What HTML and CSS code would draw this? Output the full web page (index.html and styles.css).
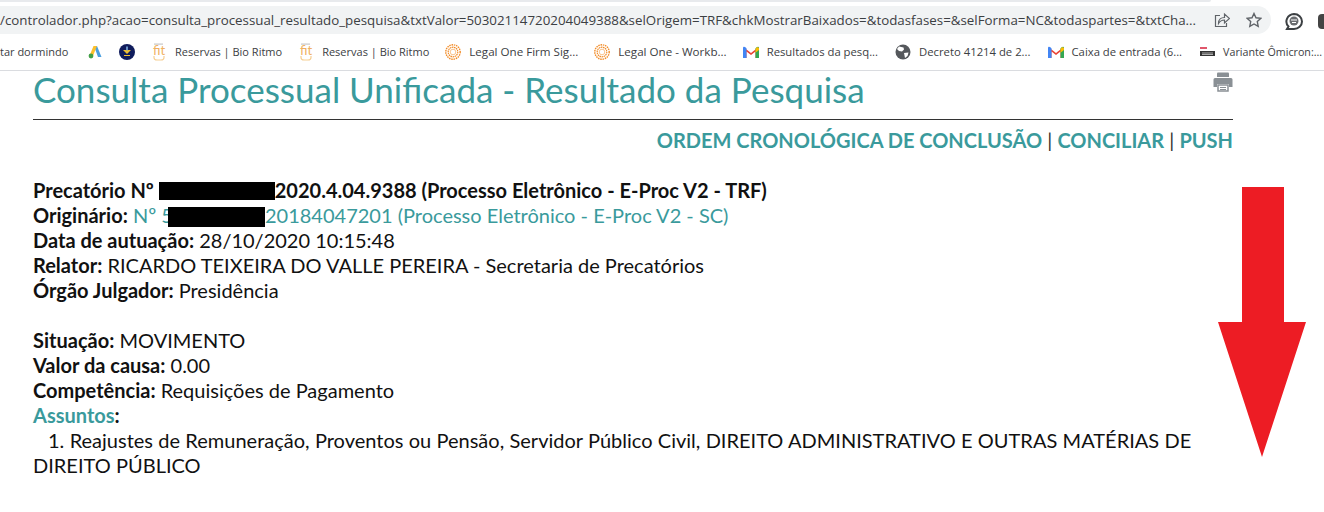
FILE: index.html
```html
<!DOCTYPE html>
<html lang="pt-BR">
<head>
  <meta charset="UTF-8">
  <title>Consulta Processual Unificada</title>
  <link rel="stylesheet" href="styles.css">
</head>
<body>

<div class="top-strip"></div>
<div class="toolbar">
  <div class="omnibox">
    <span class="url">/controlador.php?acao=consulta_processual_resultado_pesquisa&amp;txtValor=50302114720204049388&amp;selOrigem=TRF&amp;chkMostrarBaixados=&amp;todasfases=&amp;selForma=NC&amp;todaspartes=&amp;txtCha...</span>
    <svg class="omni-icon" width="16" height="16" viewBox="0 0 16 16" fill="none" stroke="#5f6368" stroke-width="1.200"><path d="M6 3.500H1.500v11h11V11"/><path d="M4.500 11.500C4.500 7.500 7 5.500 10.500 5.500V2l5 4.500-5 4.500V8C8 8 6 9 4.500 11.500z"/></svg>
    <svg class="omni-icon" width="16" height="16" viewBox="0 0 16 16" fill="none" stroke="#5f6368" stroke-width="1.400"><path d="M8 1.500l2 4.300 4.700.6-3.400 3.200.9 4.700L8 12l-4.200 2.300.9-4.700L1.300 6.400 6 5.800z"/></svg>
  </div>
  <svg class="ext-chat" width="18" height="17" viewBox="0 0 18 17"><path d="M9 1a8 7.500 0 0 1 0 15H2l1.500-2.500A8 7.500 0 0 1 9 1z" fill="#fff" stroke="#3c4043" stroke-width="2"/><circle cx="9" cy="8" r="4.500" fill="#6a6d70"/><path d="M6 7h6M7 9.500h4" stroke="#fff"/></svg>
  <div class="ext-cut"></div>
</div>

<div class="bookmarks">
  <span class="bm bm-first">tar dormindo</span>
  <span class="bm"><svg width="16" height="16" viewBox="0 0 16 16"><path d="M7 2h3l4.500 11H11z" fill="#4a9fe0"/><path d="M6.500 2H10L5.500 13H2z" fill="#fbc02d"/><circle cx="4" cy="12" r="2.400" fill="#43a047"/></svg></span>
  <span class="bm"><svg width="16" height="16" viewBox="0 0 16 16"><circle cx="8" cy="8" r="8" fill="#101c5c"/><path d="M4 6h8L8 10z" fill="#f0c030"/><rect x="7.200" y="2.500" width="1.600" height="4" fill="#7fb0e0"/><rect x="5" y="11" width="6" height="1" fill="#f0c030"/></svg></span>
  <span class="bm">
    <svg class="fav" width="16" height="18" viewBox="0 0 16 18"><rect x="3" y="0.500" width="9" height="1.200" fill="#c8c8c8"/><text x="8" y="12" text-anchor="middle" class="fit">fit</text><path d="M3 13v1.500q0 2.500 3 2.500h4q3 0 3-2.500V13" fill="none" stroke="#f6cf94" stroke-width="1.200"/></svg>
    Reservas | Bio Ritmo
  </span>
  <span class="bm">
    <svg class="fav" width="16" height="18" viewBox="0 0 16 18"><rect x="3" y="0.500" width="9" height="1.200" fill="#c8c8c8"/><text x="8" y="12" text-anchor="middle" class="fit">fit</text><path d="M3 13v1.500q0 2.500 3 2.500h4q3 0 3-2.500V13" fill="none" stroke="#f6cf94" stroke-width="1.200"/></svg>
    Reservas | Bio Ritmo
  </span>
  <span class="bm bm-legal">
    <svg class="fav" width="16" height="16" viewBox="0 0 16 16" fill="none" stroke="#f28c28"><circle cx="8" cy="8" r="7.200" stroke-width="1.400" stroke-dasharray="1.500 .8"/><circle cx="8" cy="8" r="4.800" stroke-width="1.200" stroke-dasharray="1.500 .6"/><circle cx="8" cy="8" r="2.800" stroke="#f9c48f"/></svg>
    Legal One Firm Sig...
  </span>
  <span class="bm bm-legal">
    <svg class="fav" width="16" height="16" viewBox="0 0 16 16" fill="none" stroke="#f28c28"><circle cx="8" cy="8" r="7.200" stroke-width="1.400" stroke-dasharray="1.500 .8"/><circle cx="8" cy="8" r="4.800" stroke-width="1.200" stroke-dasharray="1.500 .6"/><circle cx="8" cy="8" r="2.800" stroke="#f9c48f"/></svg>
    Legal One - Workb...
  </span>
  <span class="bm bm-mid">
    <svg class="fav" width="16" height="12" viewBox="0 0 16 12"><path d="M1 12V1.500L8 7l7-5.500V12h-2.500V5.500L8 9 3.500 5.500V12z" fill="#ea4335"/><path d="M0 12V2q0-2 2-1l1.500 1.200V12z" fill="#4285f4"/><path d="M16 12V2q0-2-2-1l-1.500 1.200V12z" fill="#34a853"/><path d="M14 1l2 1v2l-3.500 2.700V3z" fill="#fbbc04"/></svg>
    Resultados da pesq...
  </span>
  <span class="bm bm-mid">
    <svg class="fav" width="16" height="16" viewBox="0 0 16 16"><circle cx="8" cy="8" r="7.500" fill="#55585c"/><path d="M4 2.500l4.500 1 .5 2-2 2-3-.5-2-2zM9 9l4.500-.5-1 3.500-2.500 2z" fill="#fff"/></svg>
    Decreto 41214 de 2...
  </span>
  <span class="bm bm-mid">
    <svg class="fav" width="16" height="12" viewBox="0 0 16 12"><path d="M1 12V1.500L8 7l7-5.500V12h-2.500V5.500L8 9 3.500 5.500V12z" fill="#ea4335"/><path d="M0 12V2q0-2 2-1l1.500 1.200V12z" fill="#4285f4"/><path d="M16 12V2q0-2-2-1l-1.500 1.200V12z" fill="#34a853"/><path d="M14 1l2 1v2l-3.500 2.700V3z" fill="#fbbc04"/></svg>
    Caixa de entrada (6...
  </span>
  <span class="bm bm-last">
    <svg class="fav" width="16" height="12" viewBox="0 0 16 12"><rect x="1" y="1" width="7" height="2" fill="#e0576b"/><rect x="1" y="5" width="15" height="5" fill="#333"/><path d="M3 7h11M3 8.500h11" stroke="#fff" stroke-width=".6"/></svg>
    Variante Ômicron:...
  </span>
</div>

<main class="page">
  <div class="title-row">
    <h1>Consulta Processual Unificada - Resultado da Pesquisa</h1>
    <svg class="printer" width="20" height="20" viewBox="0 0 20 20"><path d="M4 1.500q0-1 1-1h10q1 0 1 1V5H4z" fill="#8a9095"/><path d="M2 6h16q1.500 0 1.500 1.500V15H16v-3H4v3H.5V7.500Q.5 6 2 6z" fill="#8a9095"/><path d="M5 13h10v6H5z" fill="#fff" stroke="#8a9095" stroke-width="1.500"/><path d="M7 15.500h6M7 17.500h6" stroke="#8a9095"/></svg>
  </div>
  <nav class="links">
    <a>ORDEM CRONOLÓGICA DE CONCLUSÃO</a> | <a>CONCILIAR</a> | <a>PUSH</a>
  </nav>

  <section class="dados">
    <div><b>Precatório Nº <span class="tarja t1"></span>2020.4.04.9388 (Processo Eletrônico - E-Proc V2 - TRF)</b></div>
    <div><b>Originário:</b> <a>Nº 5<span class="tarja t2"></span>20184047201 (Processo Eletrônico - E-Proc V2 - SC)</a></div>
    <div><b>Data de autuação:</b> 28/10/2020 10:15:48</div>
    <div><b>Relator:</b> RICARDO TEIXEIRA DO VALLE PEREIRA - Secretaria de Precatórios</div>
    <div><b>Órgão Julgador:</b> Presidência</div>
    <br>
    <div><b>Situação:</b> MOVIMENTO</div>
    <div><b>Valor da causa:</b> 0.00</div>
    <div><b>Competência:</b> Requisições de Pagamento</div>
    <div><b><a>Assuntos</a>:</b></div>
    <div class="assunto">1. Reajustes de Remuneração, Proventos ou Pensão, Servidor Público Civil, DIREITO ADMINISTRATIVO E OUTRAS MATÉRIAS DE DIREITO PÚBLICO</div>
  </section>
</main>

<svg class="seta" width="88" height="270" viewBox="0 0 88 270"><path d="M24 0h42v135h22L44 270 0 135h24z" fill="#ed1c24"/></svg>

</body>
</html>
```

FILE: styles.css
```css
body {
  margin: 0;
  background: #fff;
  font-family: Lato, sans-serif;
  color: #111;
  overflow: hidden;
}

a {
  color: #3a9a9c;
}

.top-strip {
  width: 1211px;
  height: 2px;
  background: #e8eaed;
  border-radius: 0 0 6px 0;
}

.toolbar {
  height: 33px;
  display: flex;
  align-items: flex-start;
  padding-top: 4px;
  box-sizing: border-box;
}

.omnibox {
  width: 1271px;
  height: 28px;
  background: #f1f3f4;
  border-radius: 0 14px 14px 0;
  display: flex;
  align-items: center;
  font-family: "Open Sans", sans-serif;
  font-size: 13.330px;
  color: #3c4043;
  flex-shrink: 0;
}

.url {
  white-space: nowrap;
  width: 1214px;
  flex-shrink: 0;
}

.omni-icon {
  margin-right: 16px;
  flex-shrink: 0;
}

.ext-chat {
  margin: 7px 0 0 14px;
  flex-shrink: 0;
}

.ext-cut {
  width: 6px;
  height: 15px;
  margin: 8px 0 0 15px;
  background: #444;
  border-radius: 4px 0 0 4px;
  flex-shrink: 0;
}

.bookmarks {
  height: 33px;
  padding-bottom: 2px;
  display: flex;
  align-items: center;
  border-bottom: 1px solid #dadce0;
  font-family: "Open Sans", sans-serif;
  font-size: 11px;
  color: #3c4043;
  white-space: nowrap;
}

.bm {
  display: flex;
  align-items: center;
  flex-shrink: 0;
  margin-right: 16px;
}

.bm-first {
  width: 71px;
}

.bm-legal {
  font-size: 11.600px;
}

.bm-mid {
  font-size: 11.300px;
  margin-right: 17px;
}

.bm-last {
  font-size: 10.700px;
  margin-right: 0;
}

.fav {
  margin-right: 8px;
  flex-shrink: 0;
}

.fit {
  font-family: Lato, sans-serif;
  font-size: 13px;
  fill: #f0b060;
}

.page {
  width: 1200px;
  margin-left: 33px;
}

.title-row {
  display: flex;
  justify-content: space-between;
  align-items: flex-start;
  height: 48px;
  border-bottom: 1px solid #333;
}

h1 {
  margin: 0;
  font-size: 35px;
  font-weight: 400;
  color: #3a9a9c;
  line-height: 36px;
}

.printer {
  margin-top: 1px;
}

.links {
  text-align: right;
  font-size: 20px;
  line-height: 24px;
  margin-top: 8px;
  color: #333;
}

.links a {
  font-weight: bold;
}

.dados {
  margin-top: 26px;
  font-size: 20px;
  line-height: 25px;
}

.assunto {
  text-indent: 15px;
  word-spacing: 0.200px;
}

.tarja {
  display: inline-block;
  background: #000;
  vertical-align: -2px;
}

.t1 {
  width: 116px;
  height: 18px;
}

.t2 {
  width: 97px;
  height: 20px;
  margin-left: -5px;
  vertical-align: -4px;
}

.seta {
  position: absolute;
  left: 1218px;
  top: 187px;
}
```
